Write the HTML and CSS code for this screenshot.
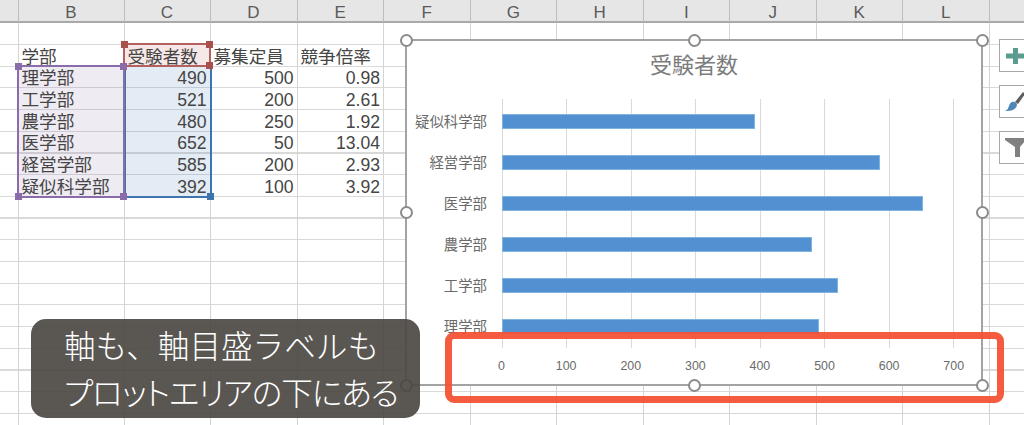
FILE: index.html
```html
<!DOCTYPE html>
<html lang="ja">
<head>
    <meta charset="utf-8">
    <title>受験者数</title>
    <link rel="stylesheet" href="styles.css">
</head>
<body>
<div class="sheet">
    <div class="col colA"><div class="head"></div></div>
    <div class="col colB">
        <div class="head">B</div>
        <div class="cell"></div>
        <div class="cell">学部</div>
        <div class="cell tintPurple">理学部</div>
        <div class="cell tintPurple">工学部</div>
        <div class="cell tintPurple">農学部</div>
        <div class="cell tintPurple">医学部</div>
        <div class="cell tintPurple">経営学部</div>
        <div class="cell tintPurple">疑似科学部</div>
    </div>
    <div class="col colC">
        <div class="head">C</div>
        <div class="cell"></div>
        <div class="cell tintRed">受験者数</div>
        <div class="cell num tintBlue">490</div>
        <div class="cell num tintBlue">521</div>
        <div class="cell num tintBlue">480</div>
        <div class="cell num tintBlue">652</div>
        <div class="cell num tintBlue">585</div>
        <div class="cell num tintBlue">392</div>
    </div>
    <div class="col colD">
        <div class="head">D</div>
        <div class="cell"></div>
        <div class="cell">募集定員</div>
        <div class="cell num">500</div>
        <div class="cell num">200</div>
        <div class="cell num">250</div>
        <div class="cell num">50</div>
        <div class="cell num">200</div>
        <div class="cell num">100</div>
    </div>
    <div class="col colE">
        <div class="head">E</div>
        <div class="cell"></div>
        <div class="cell">競争倍率</div>
        <div class="cell num">0.98</div>
        <div class="cell num">2.61</div>
        <div class="cell num">1.92</div>
        <div class="cell num">13.04</div>
        <div class="cell num">2.93</div>
        <div class="cell num">3.92</div>
    </div>
    <div class="col colN"><div class="head">F</div></div>
    <div class="col colN"><div class="head">G</div></div>
    <div class="col colN"><div class="head">H</div></div>
    <div class="col colN"><div class="head">I</div></div>
    <div class="col colN"><div class="head">J</div></div>
    <div class="col colN"><div class="head">K</div></div>
    <div class="col colN"><div class="head">L</div></div>
    <div class="col colLast"><div class="head"></div></div>

    <!-- 参照範囲の枠 -->
    <div class="range rangeBlue"><i class="dot br"></i></div>
    <div class="range rangeRed"><i class="dot tl"></i><i class="dot tr"></i><i class="dot br"></i></div>
    <div class="range rangePurple"><i class="dot tl"></i><i class="dot tr"></i><i class="dot bl"></i><i class="dot br"></i></div>

    <div class="chart">
        <div class="chartTitle">受験者数</div>
        <div class="plot">
            <div class="row"><span class="label">疑似科学部</span><span class="bar" style="width:253px"></span></div>
            <div class="row"><span class="label">経営学部</span><span class="bar" style="width:378px"></span></div>
            <div class="row"><span class="label">医学部</span><span class="bar" style="width:421px"></span></div>
            <div class="row"><span class="label">農学部</span><span class="bar" style="width:310px"></span></div>
            <div class="row"><span class="label">工学部</span><span class="bar" style="width:336px"></span></div>
            <div class="row"><span class="label">理学部</span><span class="bar" style="width:317px"></span></div>
        </div>
        <div class="axis">
            <span>0</span><span>100</span><span>200</span><span>300</span><span>400</span><span>500</span><span>600</span><span>700</span>
        </div>
        <i class="handle h1"></i><i class="handle h2"></i><i class="handle h3"></i>
        <i class="handle h4"></i><i class="handle h5"></i>
        <i class="handle h6"></i><i class="handle h7"></i><i class="handle h8"></i>
    </div>

    <div class="sideBtns">
        <div class="sideBtn">
            <svg width="25" height="32" viewBox="0 0 25 32"><path d="M13 8h5v5.500h7v5h-7V24h-5v-5.500H6v-5h7z" fill="#5a9c8f"/></svg>
        </div>
        <div class="sideBtn">
            <svg width="25" height="32" viewBox="0 0 25 32"><path d="M15 16l8-10 2 2-7 10z" fill="#5f5f5f"/><path d="M12 16c3-1 5 1 5 3-1 5-6 6-12 6 3-1 3-3 4-5 .5-2 1.500-3.500 3-4z" fill="#4f86b8"/></svg>
        </div>
        <div class="sideBtn">
            <svg width="25" height="32" viewBox="0 0 25 32"><path d="M5 6h20v3l-5 6v10h-5V15L5 8z" fill="#808080"/></svg>
        </div>
    </div>

    <div class="redBox"></div>
    <div class="note">
        <div>軸も、軸目盛ラベルも</div>
        <div class="noteLine2">プロットエリアの下にある</div>
    </div>
</div>
</body>
</html>
```

FILE: styles.css
```css
html, body {
    margin: 0;
    padding: 0;
    overflow: hidden;
}

.sheet {
    position: relative;
    display: flex;
    width: 1024px;
    height: 425px;
    overflow: hidden;
    font-family: "Liberation Sans", "Noto Sans CJK JP", sans-serif;
    font-size: 17.6px;
    color: #454545;
    background-color: #fff;
    background-image: repeating-linear-gradient(transparent 0, transparent 0.4px, #d9d9d9 0.4px, #d9d9d9 1.6px, transparent 1.6px, transparent 21.7px);
}

/* 列 */
.col {
    flex: none;
    box-sizing: border-box;
    border-right: 1px solid #d4d4d4;
}

.colA { width: 18.5px; }
.colB { width: 106px; }
.colC { width: 86px; }
.colD { width: 87px; }
.colE { width: 86.5px; }
.colN { width: 86.5px; }
.colLast { flex: 1; border-right: 0; }

.head {
    box-sizing: border-box;
    height: 23px;
    margin-right: -1px;
    border-right: 1px solid #bdbdbd;
    border-bottom: 2px solid #a9a9a9;
    background: #e6e6e6;
    color: #5a5a5a;
    font-size: 17px;
    line-height: 26px;
    text-align: center;
}

.cell {
    box-sizing: border-box;
    height: 21.7px;
    padding: 0 3px;
    line-height: 25px;
    white-space: nowrap;
}

.num {
    text-align: right;
}

.tintPurple { background: rgba(128, 100, 162, 0.13); }
.tintBlue { background: rgba(79, 129, 189, 0.16); }
.tintRed { background: rgba(192, 80, 77, 0.13); }

/* 参照範囲 */
.range {
    position: absolute;
    box-sizing: border-box;
    border: 2px solid;
}

.rangePurple {
    left: 17px;
    top: 65px;
    width: 108px;
    height: 133px;
    border-color: #8a6cab;
}

.rangeBlue {
    left: 124px;
    top: 65px;
    width: 88px;
    height: 133px;
    border-color: #3f74ad;
}

.rangeRed {
    left: 123px;
    top: 43px;
    width: 88px;
    height: 24px;
    border-color: #b4605f;
}

.dot {
    position: absolute;
    width: 7px;
    height: 7px;
    background: #8a6cab;
}

.rangeRed .dot { background: #a94f4c; }
.rangeBlue .dot { background: #3f74ad; }

.tl { left: -4px; top: -4px; }
.tr { right: -4px; top: -4px; }
.bl { left: -4px; bottom: -4px; }
.br { right: -4px; bottom: -4px; }

/* グラフ */
.chart {
    position: absolute;
    left: 405px;
    top: 39px;
    box-sizing: border-box;
    width: 578px;
    height: 347px;
    border: 2px solid #a3a3a3;
    background: #fff;
    color: #6a6a6a;
}

.chartTitle {
    height: 30px;
    margin-top: 10px;
    font-size: 22px;
    line-height: 30px;
    text-align: center;
    color: #7c7c7c;
}

.plot {
    margin-top: 18px;
    padding-top: 2px;
    padding-bottom: 1px;
    background-image: repeating-linear-gradient(to right, #dadada 0, #dadada 1px, transparent 1px, transparent 64.5px);
    background-position: 94.5px 0;
    background-size: 453px 100%;
    background-repeat: no-repeat;
}

.row {
    display: flex;
    align-items: center;
    height: 41px;
}

.label {
    flex: none;
    width: 80px;
    margin-right: 14.5px;
    font-size: 14.4px;
    line-height: 20px;
    text-align: right;
}

.bar {
    box-sizing: border-box;
    height: 15px;
    background: #5390d2;
    border: 1px solid #7db4e0;
}

.axis {
    display: flex;
    margin: 10px 0 0 62.25px;
    font-size: 12.4px;
    line-height: 16px;
}

.axis span {
    flex: none;
    width: 64.6px;
    text-align: center;
}

.handle {
    position: absolute;
    box-sizing: border-box;
    width: 13px;
    height: 13px;
    margin: -6.5px 0 0 -6.5px;
    border: 2px solid #8b8b8b;
    border-radius: 50%;
    background: #fff;
}

.h1 { left: -1px; top: -1px; }
.h2 { left: 50%; top: -1px; }
.h3 { left: calc(100% + 1px); top: -1px; }
.h4 { left: -1px; top: 50%; }
.h5 { left: calc(100% + 1px); top: 50%; }
.h6 { left: -1px; top: calc(100% + 1px); }
.h7 { left: 50%; top: calc(100% + 1px); }
.h8 { left: calc(100% + 1px); top: calc(100% + 1px); }

/* グラフ右のボタン */
.sideBtns {
    position: absolute;
    left: 999px;
    top: 39px;
    display: flex;
    flex-direction: column;
    gap: 13px;
}

.sideBtn {
    box-sizing: border-box;
    width: 40px;
    height: 33px;
    border: 1px solid #a8a8a8;
    background: #fff;
}

.sideBtn svg {
    display: block;
}

/* 注釈 */
.redBox {
    position: absolute;
    left: 445px;
    top: 332px;
    box-sizing: border-box;
    width: 559px;
    height: 71px;
    border: 7px solid rgba(244, 80, 48, 0.93);
    border-radius: 9px;
}

.note {
    position: absolute;
    left: 31px;
    top: 319px;
    box-sizing: border-box;
    width: 389px;
    height: 99px;
    padding: 2px 0 0 33px;
    border-radius: 15px;
    background: rgba(74, 70, 66, 0.91);
    color: #fff;
    font-family: "Noto Sans CJK JP", sans-serif;
    font-size: 31.6px;
    font-weight: 300;
    line-height: 47px;
    white-space: nowrap;
}

.noteLine2 {
    font-feature-settings: "palt";
    letter-spacing: -1px;
}
```
